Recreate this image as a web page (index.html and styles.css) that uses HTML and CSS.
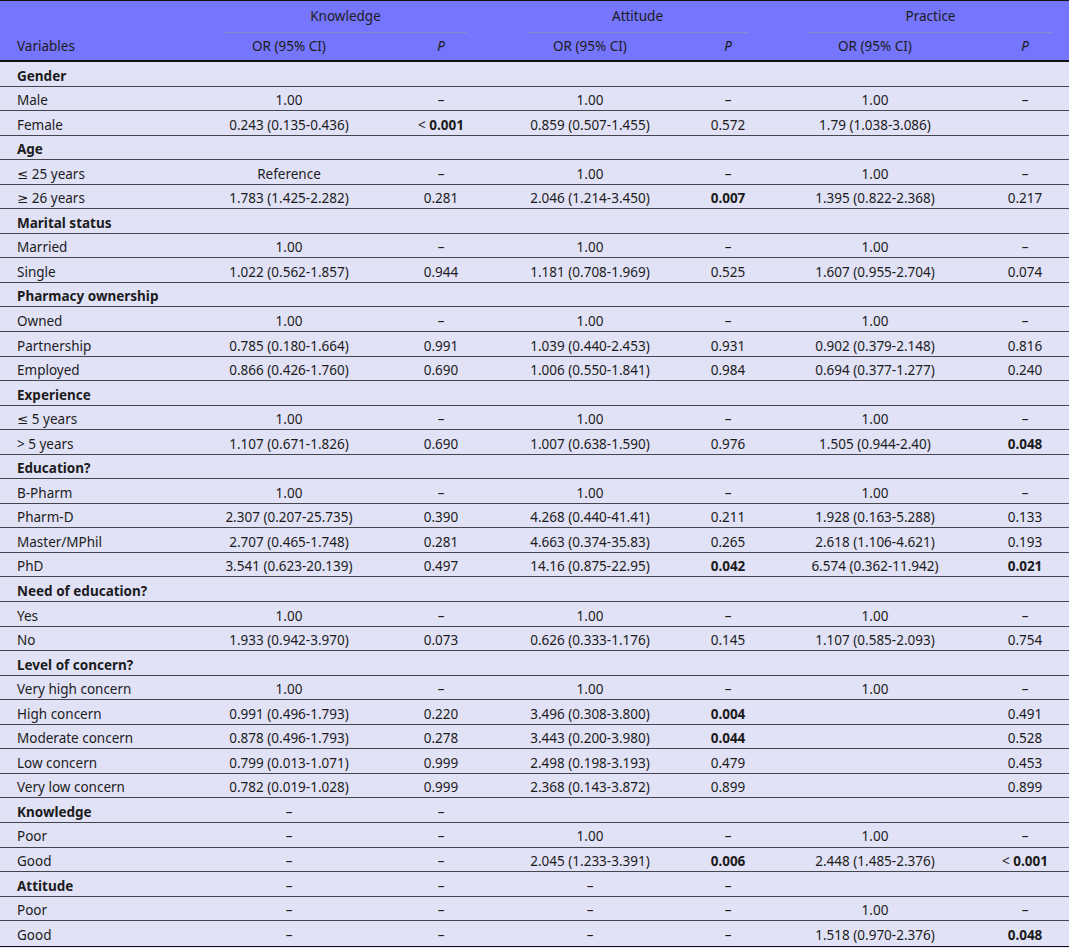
FILE: index.html
```html
<!DOCTYPE html>
<html lang="en">
<head>
<meta charset="utf-8">
<title>Odds ratios table</title>
<link rel="stylesheet" href="styles.css">
</head>
<body>
<div class="table">
  <div class="head">
    <div class="head-groups">
      <div class="spacer"></div>
      <div class="group g-k">Knowledge</div>
      <div class="gap-a"></div>
      <div class="group g-a">Attitude</div>
      <div class="gap-b"></div>
      <div class="group g-p">Practice</div>
      <div class="gap-c"></div>
    </div>
    <div class="row head-row">
      <div class="c var">Variables</div>
      <div class="c">OR (95% CI)</div>
      <div class="c"><i>P</i></div>
      <div class="c">OR (95% CI)</div>
      <div class="c"><i>P</i></div>
      <div class="c">OR (95% CI)</div>
      <div class="c last"><i>P</i></div>
    </div>
  </div>
  <div class="body">
    <div class="row grp"><div class="c var">Gender</div><div class="c"></div><div class="c"></div><div class="c"></div><div class="c"></div><div class="c"></div><div class="c last"></div></div>
    <div class="row"><div class="c var">Male</div><div class="c">1.00</div><div class="c">–</div><div class="c">1.00</div><div class="c">–</div><div class="c">1.00</div><div class="c last">–</div></div>
    <div class="row"><div class="c var">Female</div><div class="c">0.243 (0.135-0.436)</div><div class="c">&lt; <b>0.001</b></div><div class="c">0.859 (0.507-1.455)</div><div class="c">0.572</div><div class="c">1.79 (1.038-3.086)</div><div class="c last"></div></div>

    <div class="row grp"><div class="c var">Age</div><div class="c"></div><div class="c"></div><div class="c"></div><div class="c"></div><div class="c"></div><div class="c last"></div></div>
    <div class="row"><div class="c var">≤ 25 years</div><div class="c">Reference</div><div class="c">–</div><div class="c">1.00</div><div class="c">–</div><div class="c">1.00</div><div class="c last">–</div></div>
    <div class="row"><div class="c var">≥ 26 years</div><div class="c">1.783 (1.425-2.282)</div><div class="c">0.281</div><div class="c">2.046 (1.214-3.450)</div><div class="c"><b>0.007</b></div><div class="c">1.395 (0.822-2.368)</div><div class="c last">0.217</div></div>

    <div class="row grp"><div class="c var">Marital status</div><div class="c"></div><div class="c"></div><div class="c"></div><div class="c"></div><div class="c"></div><div class="c last"></div></div>
    <div class="row"><div class="c var">Married</div><div class="c">1.00</div><div class="c">–</div><div class="c">1.00</div><div class="c">–</div><div class="c">1.00</div><div class="c last">–</div></div>
    <div class="row"><div class="c var">Single</div><div class="c">1.022 (0.562-1.857)</div><div class="c">0.944</div><div class="c">1.181 (0.708-1.969)</div><div class="c">0.525</div><div class="c">1.607 (0.955-2.704)</div><div class="c last">0.074</div></div>

    <div class="row grp"><div class="c var">Pharmacy ownership</div><div class="c"></div><div class="c"></div><div class="c"></div><div class="c"></div><div class="c"></div><div class="c last"></div></div>
    <div class="row"><div class="c var">Owned</div><div class="c">1.00</div><div class="c">–</div><div class="c">1.00</div><div class="c">–</div><div class="c">1.00</div><div class="c last">–</div></div>
    <div class="row"><div class="c var">Partnership</div><div class="c">0.785 (0.180-1.664)</div><div class="c">0.991</div><div class="c">1.039 (0.440-2.453)</div><div class="c">0.931</div><div class="c">0.902 (0.379-2.148)</div><div class="c last">0.816</div></div>
    <div class="row"><div class="c var">Employed</div><div class="c">0.866 (0.426-1.760)</div><div class="c">0.690</div><div class="c">1.006 (0.550-1.841)</div><div class="c">0.984</div><div class="c">0.694 (0.377-1.277)</div><div class="c last">0.240</div></div>

    <div class="row grp"><div class="c var">Experience</div><div class="c"></div><div class="c"></div><div class="c"></div><div class="c"></div><div class="c"></div><div class="c last"></div></div>
    <div class="row"><div class="c var">≤ 5 years</div><div class="c">1.00</div><div class="c">–</div><div class="c">1.00</div><div class="c">–</div><div class="c">1.00</div><div class="c last">–</div></div>
    <div class="row"><div class="c var">&gt; 5 years</div><div class="c">1.107 (0.671-1.826)</div><div class="c">0.690</div><div class="c">1.007 (0.638-1.590)</div><div class="c">0.976</div><div class="c">1.505 (0.944-2.40)</div><div class="c last"><b>0.048</b></div></div>

    <div class="row grp"><div class="c var">Education?</div><div class="c"></div><div class="c"></div><div class="c"></div><div class="c"></div><div class="c"></div><div class="c last"></div></div>
    <div class="row"><div class="c var">B-Pharm</div><div class="c">1.00</div><div class="c">–</div><div class="c">1.00</div><div class="c">–</div><div class="c">1.00</div><div class="c last">–</div></div>
    <div class="row"><div class="c var">Pharm-D</div><div class="c">2.307 (0.207-25.735)</div><div class="c">0.390</div><div class="c">4.268 (0.440-41.41)</div><div class="c">0.211</div><div class="c">1.928 (0.163-5.288)</div><div class="c last">0.133</div></div>
    <div class="row"><div class="c var">Master/MPhil</div><div class="c">2.707 (0.465-1.748)</div><div class="c">0.281</div><div class="c">4.663 (0.374-35.83)</div><div class="c">0.265</div><div class="c">2.618 (1.106-4.621)</div><div class="c last">0.193</div></div>
    <div class="row"><div class="c var">PhD</div><div class="c">3.541 (0.623-20.139)</div><div class="c">0.497</div><div class="c">14.16 (0.875-22.95)</div><div class="c"><b>0.042</b></div><div class="c">6.574 (0.362-11.942)</div><div class="c last"><b>0.021</b></div></div>

    <div class="row grp"><div class="c var">Need of education?</div><div class="c"></div><div class="c"></div><div class="c"></div><div class="c"></div><div class="c"></div><div class="c last"></div></div>
    <div class="row"><div class="c var">Yes</div><div class="c">1.00</div><div class="c">–</div><div class="c">1.00</div><div class="c">–</div><div class="c">1.00</div><div class="c last">–</div></div>
    <div class="row"><div class="c var">No</div><div class="c">1.933 (0.942-3.970)</div><div class="c">0.073</div><div class="c">0.626 (0.333-1.176)</div><div class="c">0.145</div><div class="c">1.107 (0.585-2.093)</div><div class="c last">0.754</div></div>

    <div class="row grp"><div class="c var">Level of concern?</div><div class="c"></div><div class="c"></div><div class="c"></div><div class="c"></div><div class="c"></div><div class="c last"></div></div>
    <div class="row"><div class="c var">Very high concern</div><div class="c">1.00</div><div class="c">–</div><div class="c">1.00</div><div class="c">–</div><div class="c">1.00</div><div class="c last">–</div></div>
    <div class="row"><div class="c var">High concern</div><div class="c">0.991 (0.496-1.793)</div><div class="c">0.220</div><div class="c">3.496 (0.308-3.800)</div><div class="c"><b>0.004</b></div><div class="c"></div><div class="c last">0.491</div></div>
    <div class="row"><div class="c var">Moderate concern</div><div class="c">0.878 (0.496-1.793)</div><div class="c">0.278</div><div class="c">3.443 (0.200-3.980)</div><div class="c"><b>0.044</b></div><div class="c"></div><div class="c last">0.528</div></div>
    <div class="row"><div class="c var">Low concern</div><div class="c">0.799 (0.013-1.071)</div><div class="c">0.999</div><div class="c">2.498 (0.198-3.193)</div><div class="c">0.479</div><div class="c"></div><div class="c last">0.453</div></div>
    <div class="row"><div class="c var">Very low concern</div><div class="c">0.782 (0.019-1.028)</div><div class="c">0.999</div><div class="c">2.368 (0.143-3.872)</div><div class="c">0.899</div><div class="c"></div><div class="c last">0.899</div></div>

    <div class="row grp"><div class="c var">Knowledge</div><div class="c">–</div><div class="c">–</div><div class="c"></div><div class="c"></div><div class="c"></div><div class="c last"></div></div>
    <div class="row"><div class="c var">Poor</div><div class="c">–</div><div class="c">–</div><div class="c">1.00</div><div class="c">–</div><div class="c">1.00</div><div class="c last">–</div></div>
    <div class="row"><div class="c var">Good</div><div class="c">–</div><div class="c">–</div><div class="c">2.045 (1.233-3.391)</div><div class="c"><b>0.006</b></div><div class="c">2.448 (1.485-2.376)</div><div class="c last">&lt; <b>0.001</b></div></div>

    <div class="row grp"><div class="c var">Attitude</div><div class="c">–</div><div class="c">–</div><div class="c">–</div><div class="c">–</div><div class="c"></div><div class="c last"></div></div>
    <div class="row"><div class="c var">Poor</div><div class="c">–</div><div class="c">–</div><div class="c">–</div><div class="c">–</div><div class="c">1.00</div><div class="c last">–</div></div>
    <div class="row"><div class="c var">Good</div><div class="c">–</div><div class="c">–</div><div class="c">–</div><div class="c">–</div><div class="c">1.518 (0.970-2.376)</div><div class="c last"><b>0.048</b></div></div>
  </div>
</div>
</body>
</html>
```

FILE: styles.css
```css
html, body {
  margin: 0;
  padding: 0;
  background: #e2e2f7;
}

body {
  font-family: "Noto Sans", "DejaVu Sans", sans-serif;
  font-size: 13.5px;
  color: #1c1c1c;
}

.table {
  width: 1069px;
  border-top: 1px solid #111;
  border-bottom: 1px solid #111;
}

.head {
  background: #7575fd;
  border-bottom: 2px solid #111;
}

.head-groups {
  display: grid;
  grid-template-columns: 224px 243px 60px 221px 61px 243px 17px;
  height: 31px;
}

.group {
  text-align: center;
  line-height: 31px;
  border-bottom: 1px solid #8a8ac4;
  box-sizing: border-box;
}

.row {
  display: grid;
  grid-template-columns: 224px 130px 174px 124px 152px 142px 123px;
  box-sizing: border-box;
  height: 24.55px;
  border-bottom: 1px solid #45454f;
}

.body .row:last-child {
  border-bottom: none;
}

.head-row {
  height: 28px;
  border-bottom: none;
}

.c {
  text-align: center;
  white-space: nowrap;
  line-height: 24px;
}

.body .c {
  padding-top: 1.5px;
}

.head-row .c {
  line-height: 29px;
}

.c.var {
  text-align: left;
  padding-left: 17px;
}

.c.last {
  padding-left: 35px;
}

.grp .c.var {
  font-weight: 700;
}

b {
  font-weight: 700;
}
```
